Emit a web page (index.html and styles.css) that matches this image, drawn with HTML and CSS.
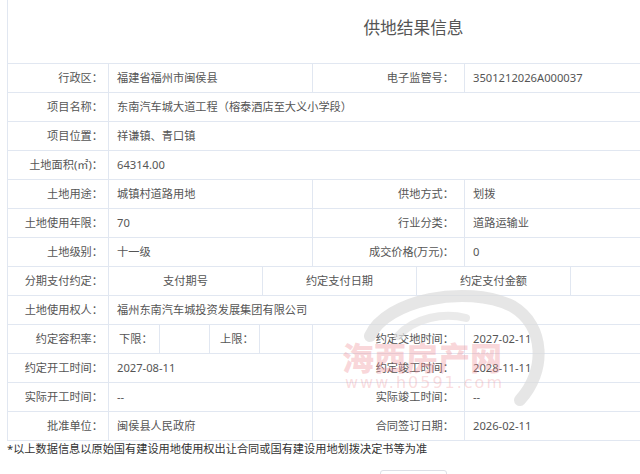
FILE: index.html
```html
<!DOCTYPE html>
<html lang="zh-CN">
<head>
<meta charset="utf-8">
<title>供地结果信息</title>
<link rel="stylesheet" href="styles.css">
</head>
<body>
<div class="page">
  <table class="info">
    <colgroup>
      <col class="c1"><col class="c2"><col class="c3"><col class="c4">
    </colgroup>
    <tr class="head"><td colspan="4"><h1 class="title">供地结果信息</h1></td></tr>
    <tr><th>行政区：</th><td>福建省福州市闽侯县</td><th class="lab2">电子监管号：</th><td>3501212026A000037</td></tr>
    <tr><th>项目名称：</th><td colspan="3">东南汽车城大道工程（榕泰酒店至大义小学段）</td></tr>
    <tr><th>项目位置：</th><td colspan="3">祥谦镇、青口镇</td></tr>
    <tr><th>土地面积(㎡)：</th><td colspan="3">64314.00</td></tr>
    <tr><th>土地用途：</th><td>城镇村道路用地</td><th class="lab2">供地方式：</th><td>划拨</td></tr>
    <tr><th>土地使用年限：</th><td>70</td><th class="lab2">行业分类：</th><td>道路运输业</td></tr>
    <tr><th>土地级别：</th><td>十一级</td><th class="lab2">成交价格(万元)：</th><td>0</td></tr>
    <tr><th>分期支付约定：</th><td colspan="3" class="sub">
      <div class="pay">
        <div class="pc">支付期号</div>
        <div class="pc">约定支付日期</div>
        <div class="pc">约定支付金额</div>
        <div class="pc last"></div>
      </div>
    </td></tr>
    <tr><th>土地使用权人：</th><td colspan="3">福州东南汽车城投资发展集团有限公司</td></tr>
    <tr><th>约定容积率：</th><td class="sub">
      <div class="far">
        <div class="fc">下限：</div>
        <div class="fc"></div>
        <div class="fc">上限：</div>
        <div class="fc last"></div>
      </div>
    </td><th class="lab2">约定交地时间：</th><td>2027-02-11</td></tr>
    <tr><th>约定开工时间：</th><td>2027-08-11</td><th class="lab2">约定竣工时间：</th><td>2028-11-11</td></tr>
    <tr><th>实际开工时间：</th><td>--</td><th class="lab2">实际竣工时间：</th><td>--</td></tr>
    <tr><th>批准单位：</th><td>闽侯县人民政府</td><th class="lab2">合同签订日期：</th><td>2026-02-11</td></tr>
  </table>
  <p class="note">*以上数据信息以原始国有建设用地使用权出让合同或国有建设用地划拨决定书等为准</p>
  <div class="actions"><button class="btn" type="button"></button></div>
</div>
<div class="watermark" aria-hidden="true">
  <svg class="swirl" width="200" height="130" viewBox="360 285 200 130">
    <path d="M370,336 C386,300 466,284 512,306 C546,326 546,372 520,400" fill="none" stroke="#dcdcdc" stroke-width="12" stroke-linecap="round"/>
    <path d="M398,336 C414,318 444,312 466,318" fill="none" stroke="#e2e2e2" stroke-width="8" stroke-linecap="round"/>
  </svg>
  <div class="wm-name">海西房产网</div>
  <div class="wm-url">www.h0591.com</div>
</div>
</body>
</html>
```

FILE: styles.css
```css
html, body {
  margin: 0;
  padding: 0;
  overflow: hidden;
  background: #fff;
}
body {
  font-family: "Noto Sans", "Noto Sans CJK SC", sans-serif;
  font-size: 11.2px;
  color: #555;
}
.page {
  width: 812px;
  margin-left: 7px;
}
.info {
  width: 812px;
  table-layout: fixed;
  border-collapse: collapse;
}
.c1 { width: 101px; }
.c2 { width: 204px; }
.c3 { width: 152px; }
.c4 { width: 355px; }
.info td, .info th {
  border: 1px solid #e1e7f1;
  height: 28px;
  padding: 0 8px;
  font-weight: normal;
  text-align: left;
  white-space: nowrap;
  line-height: 16px;
}
.info th {
  text-align: right;
  padding: 0 5px 0 0;
}
.info th.lab2 {
  padding-right: 10px;
}
.info tr.head td {
  height: 63px;
  border-top: none;
  padding: 0;
  text-align: center;
}
.title {
  margin: 0;
  padding-bottom: 8px;
  font-size: 16.7px;
  font-weight: normal;
  color: #555;
}
.info td.sub {
  padding: 0;
  height: 28px;
}
.pay, .far {
  display: flex;
  height: 28px;
}
.pc {
  width: 153px;
  flex: none;
  display: flex;
  align-items: center;
  justify-content: center;
  border-right: 1px solid #e1e7f1;
}
.pc.last { flex: 1; border-right: none; }
.fc {
  width: 50px;
  flex: none;
  display: flex;
  align-items: center;
  padding-left: 10px;
  box-sizing: border-box;
  border-right: 1px solid #e1e7f1;
}
.fc:first-child { width: 51px; }
.fc.last { flex: 1; border-right: none; }
.note {
  margin: 0;
  padding-top: 1px;
  font-size: 11.2px;
  line-height: 14px;
  color: #333;
}
.actions {
  display: flex;
  justify-content: center;
  padding-top: 14px;
}
.btn {
  width: 67px;
  height: 26px;
  border: 1px solid #dcdfe6;
  border-radius: 3px;
  background: #fff;
}
.watermark {
  position: absolute;
  left: 0;
  top: 0;
  width: 0;
  height: 0;
  pointer-events: none;
}
.swirl {
  position: absolute;
  left: 360px;
  top: 285px;
  opacity: 0.7;
}
.wm-name {
  position: absolute;
  left: 342px;
  top: 334px;
  font-family: "Noto Sans CJK SC", sans-serif;
  font-weight: 900;
  font-size: 32px;
  line-height: 44px;
  white-space: nowrap;
  color: rgba(238, 140, 148, 0.35);
}
.wm-url {
  position: absolute;
  left: 345px;
  top: 373px;
  font-family: "DejaVu Sans", sans-serif;
  font-size: 16px;
  letter-spacing: 2px;
  line-height: 20px;
  white-space: nowrap;
  color: rgba(238, 140, 148, 0.3);
}
```
